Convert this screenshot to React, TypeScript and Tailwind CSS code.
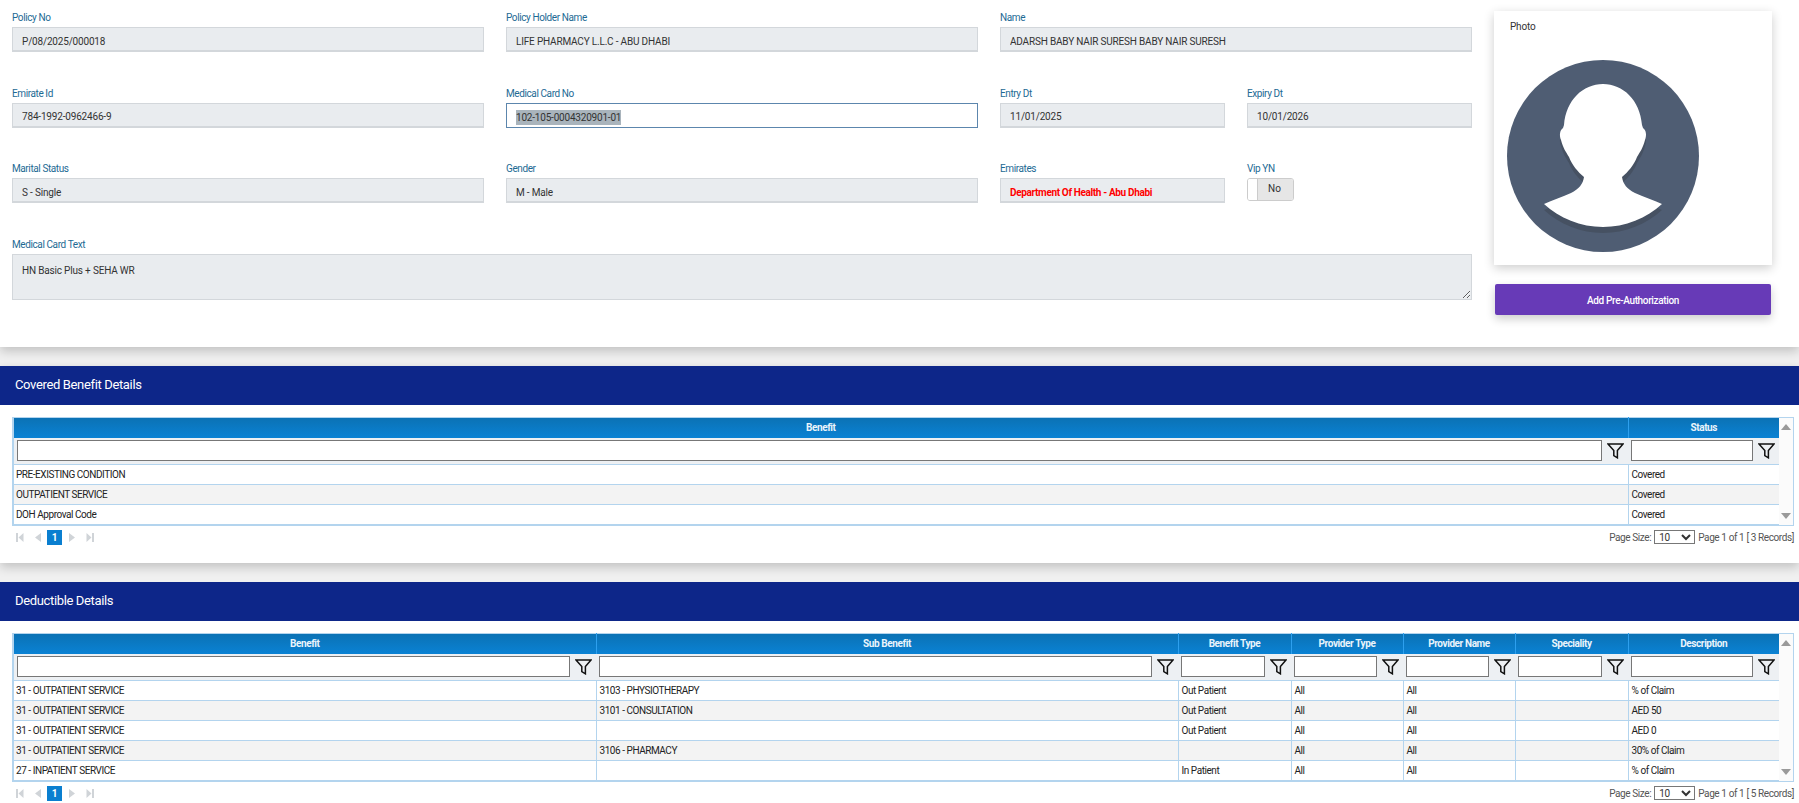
import React from 'react';

type GridProps = {
  widths: number[];
  headers: string[];
  rows: string[][];
  records: number;
};

const inputBox = 'block w-full h-[25px] pl-[9px] pr-[9px] pt-[4px] bg-[#e9ecef] border border-[#d3d7db] border-b-2 text-[10px] tracking-[-0.18px] text-[#333] outline-none';

function Label({ text }: { text: string }) {
  return <div className="h-[16px] text-[10px] leading-[14px] tracking-[-0.4px] text-[#1d6a94]">{text}</div>;
}

function Field({ label, value, className }: { label: string; value: string; className?: string }) {
  return (
    <div>
      <Label text={label} />
      <input readOnly value={value} className={`${inputBox} ${className ?? ''}`} />
    </div>
  );
}

function Funnel() {
  return (
    <svg width="17" height="16" viewBox="0 0 17 16" className="shrink-0" fill="none" stroke="#111" strokeWidth="1.5" strokeLinejoin="miter">
      <path d="M1 1H16L10.4 7.6V14.8L6.8 12.6V7.6Z" />
    </svg>
  );
}

function PagerIcons() {
  return (
    <div className="flex items-center h-[15px] mt-[4px] ml-[4px]">
      <svg width="8" height="9" viewBox="0 0 8 9" fill="#d0d4d8">
        <rect x="0" y="0" width="2" height="9" />
        <path d="M7.5 0V9L2.5 4.5Z" />
      </svg>
      <svg width="6" height="9" viewBox="0 0 6 9" fill="#d0d4d8" className="ml-[11px]">
        <path d="M6 0V9L0 4.5Z" />
      </svg>
      <div className="ml-[6px] w-[15px] h-[15px] bg-[#0a7fd0] text-white text-[10px] font-bold leading-[15px] text-center">1</div>
      <svg width="6" height="9" viewBox="0 0 6 9" fill="#d0d4d8" className="ml-[7px]">
        <path d="M0 0V9L6 4.5Z" />
      </svg>
      <svg width="8" height="9" viewBox="0 0 8 9" fill="#d0d4d8" className="ml-[11px]">
        <path d="M0.5 0V9L5.5 4.5Z" />
        <rect x="6" y="0" width="2" height="9" />
      </svg>
    </div>
  );
}

function DataGrid({ widths, headers, rows, records }: GridProps) {
  return (
    <div>
      <div className="flex">
        <table className="table-fixed border-collapse border-l-2 border-b-2 border-t border-[#b3d4ee] text-[10px]" style={{ width: widths.reduce((a, b) => a + b, 0) }}>
          <colgroup>
            {widths.map((w, i) => (
              <col key={i} style={{ width: w }} />
            ))}
          </colgroup>
          <thead>
            <tr className="h-[20px] bg-gradient-to-b from-[#0b72b5] to-[#0a82d4]">
              {headers.map((h, i) => (
                <th key={i} className="p-0 text-center text-[10px] font-bold tracking-[-0.4px] text-[#eaf4fb] border-l border-[#2ea0ee] first:border-l-0">
                  {h}
                </th>
              ))}
            </tr>
            <tr className="h-[27px] bg-[#edf0f3] border-b border-[#b3d4ee]">
              {headers.map((h, i) => (
                <td key={i} className="p-0">
                  <div className="flex items-center gap-[5px] pl-[3px] pr-[4px]">
                    <input aria-label={h} className="min-w-0 flex-1 h-[21px] bg-white border border-[#777] outline-none" />
                    <Funnel />
                  </div>
                </td>
              ))}
            </tr>
          </thead>
          <tbody>
            {rows.map((row, r) => (
              <tr key={r} className={`h-[20px] border-b border-[#b3d4ee] last:border-b-0 ${r % 2 === 1 ? 'bg-[#f3f3f3]' : 'bg-white'}`}>
                {row.map((cell, c) => (
                  <td key={c} className="p-0 pl-[3px] first:pl-[2px] text-[10px] tracking-[-0.45px] text-[#222] whitespace-nowrap border-l border-[#b3d4ee] first:border-l-0">
                    {cell}
                  </td>
                ))}
              </tr>
            ))}
          </tbody>
        </table>
        <div className="w-[16px] flex flex-col justify-between items-center py-[6px] bg-[#fbfbfb] border-r border-b border-t border-[#b3d4ee]">
          <svg width="10" height="6" viewBox="0 0 10 6" fill="#9a9a9a"><path d="M5 0L10 6H0Z" /></svg>
          <svg width="10" height="6" viewBox="0 0 10 6" fill="#9a9a9a"><path d="M0 0H10L5 6Z" /></svg>
        </div>
      </div>
      <div className="flex justify-between">
        <PagerIcons />
        <div className="flex items-center h-[15px] mt-[4px] text-[10px] tracking-[-0.4px] text-[#555]">
          <span>Page Size:</span>
          <select defaultValue="10" className="ml-[3px] w-[41px] h-[14px] p-0 bg-white border border-[#777] text-[10px] text-[#333] outline-none">
            <option value="10">10</option>
          </select>
          <span className="ml-[3px]">Page 1 of 1 [ {records} Records]</span>
        </div>
      </div>
    </div>
  );
}

function Band({ title }: { title: string }) {
  return (
    <div className="h-[39px] bg-[#0d2689] flex items-center pl-[15px] pb-[2px] text-[13px] tracking-[-0.35px] text-white">{title}</div>
  );
}

function Avatar() {
  const body =
    'M96 24C116 24 133 40 135 65L136 68C139 70 140 75 138 80C136 88 133 92 130 97C127 105 121 112 115 117C116 124 120 129 128 133C136 137 147 140 155 144C140 158 118 167 96 167C74 167 52 158 37 144C45 140 56 137 64 133C72 129 76 124 77 117C71 112 65 105 62 97C59 92 56 88 54 80C52 75 53 70 56 68L57 65C59 40 76 24 96 24Z';
  return (
    <svg width="192" height="192" viewBox="0 0 192 192" className="ml-[13px]">
      <circle cx="96" cy="96" r="96" fill="#4f5d73" />
      <path d={body} fill="#465162" transform="translate(0 6)" />
      <path d={body} fill="#ffffff" />
    </svg>
  );
}

const benefitRows = [
  ['PRE-EXISTING CONDITION', 'Covered'],
  ['OUTPATIENT SERVICE', 'Covered'],
  ['DOH Approval Code', 'Covered'],
];

const deductibleRows = [
  ['31 - OUTPATIENT SERVICE', '3103 - PHYSIOTHERAPY', 'Out Patient', 'All', 'All', '', '% of Claim'],
  ['31 - OUTPATIENT SERVICE', '3101 - CONSULTATION', 'Out Patient', 'All', 'All', '', 'AED 50'],
  ['31 - OUTPATIENT SERVICE', '', 'Out Patient', 'All', 'All', '', 'AED 0'],
  ['31 - OUTPATIENT SERVICE', '3106 - PHARMACY', '', 'All', 'All', '', '30% of Claim'],
  ['27 - INPATIENT SERVICE', '', 'In Patient', 'All', 'All', '', '% of Claim'],
];

export default function App() {
  return (
    <div className="relative h-[803px] overflow-hidden bg-[#f0f0f0] font-['Roboto',sans-serif]">
      {/* Member details */}
      <section className="h-[347px] bg-white pt-[11px] px-[12px] flex shadow-[0_4px_10px_rgba(0,0,0,0.2)]">
        <div className="w-[1460px] flex flex-col">
          <div className="grid grid-cols-[472px_472px_472px] gap-x-[22px]">
            <Field label="Policy No" value="P/08/2025/000018" />
            <Field label="Policy Holder Name" value="LIFE PHARMACY L.L.C - ABU DHABI" />
            <Field label="Name" value="ADARSH BABY NAIR SURESH BABY NAIR SURESH" />
          </div>
          <div className="grid grid-cols-[472px_472px_225px_225px] gap-x-[22px] mt-[35px]">
            <Field label="Emirate Id" value="784-1992-0962466-9" className="!pt-[3px]" />
            <div>
              <Label text="Medical Card No" />
              <div className="h-[25px] pl-[9px] pt-[3px] flex items-center bg-white border border-[#5c86ad] text-[10px] tracking-[-0.2px] text-[#333]">
                <span className="bg-[#a9b4bc]">102-105-0004320901-01</span>
              </div>
            </div>
            <Field label="Entry Dt" value="11/01/2025" className="!pt-[3px]" />
            <Field label="Expiry Dt" value="10/01/2026" className="!pt-[3px]" />
          </div>
          <div className="grid grid-cols-[472px_472px_225px_225px] gap-x-[22px] mt-[34px]">
            <Field label="Marital Status" value="S - Single" />
            <Field label="Gender" value="M - Male" />
            <Field label="Emirates" value="Department Of Health - Abu Dhabi" className="!text-[#ff0000] !tracking-[-0.35px] font-bold" />
            <div>
              <Label text="Vip YN" />
              <div className="w-[47px] h-[23px] flex rounded-[3px] border border-[#ccc] overflow-hidden text-[10px] text-[#333]">
                <div className="w-[10px] bg-white border-r border-[#ccc]" />
                <div className="flex-1 bg-[#e6e6e6] text-center leading-[19px] pr-[2px]">No</div>
              </div>
            </div>
          </div>
          <div className="mt-[35px]">
            <Label text="Medical Card Text" />
            <textarea
              readOnly
              value="HN Basic Plus + SEHA WR"
              className="block w-full h-[46px] px-[9px] py-[8px] bg-[#e9ecef] border border-[#d3d7db] text-[10px] tracking-[-0.18px] text-[#333] outline-none"
            />
          </div>
        </div>
        <div className="ml-[22px] w-[278px]">
          <div className="h-[254px] bg-white shadow-[0_3px_10px_rgba(0,0,0,0.2)]">
            <div className="h-[49px] pl-[16px] pt-[9px] text-[10px] leading-[14px] tracking-[-0.2px] text-[#333]">Photo</div>
            <Avatar />
          </div>
          <button className="block mt-[19px] mx-[1px] w-[276px] h-[31px] pt-[2px] rounded-[2px] bg-[#673ab7] text-[10px] font-medium tracking-[-0.35px] text-white shadow-[0_4px_10px_rgba(0,0,0,0.2)]">
            Add Pre-Authorization
          </button>
        </div>
      </section>

      {/* Covered benefits */}
      <section className="mt-[19px] h-[197px] bg-white shadow-[0_4px_10px_rgba(0,0,0,0.2)]">
        <Band title="Covered Benefit Details" />
        <div className="pl-[12px] pr-[5px] pt-[12px]">
          <DataGrid widths={[1615, 151]} headers={['Benefit', 'Status']} rows={benefitRows} records={3} />
        </div>
      </section>

      {/* Deductibles */}
      <section className="mt-[19px] h-[221px] bg-white">
        <Band title="Deductible Details" />
        <div className="pl-[12px] pr-[5px] pt-[12px]">
          <DataGrid
            widths={[583, 582, 113, 112, 112, 113, 151]}
            headers={['Benefit', 'Sub Benefit', 'Benefit Type', 'Provider Type', 'Provider Name', 'Speciality', 'Description']}
            rows={deductibleRows}
            records={5}
          />
        </div>
      </section>

      {/* Floating button peeking in at the corner */}
      <div className="absolute left-[1789px] top-[799px] w-[50px] h-[50px] rounded-full bg-[#5e35b1]" />
    </div>
  );
}
